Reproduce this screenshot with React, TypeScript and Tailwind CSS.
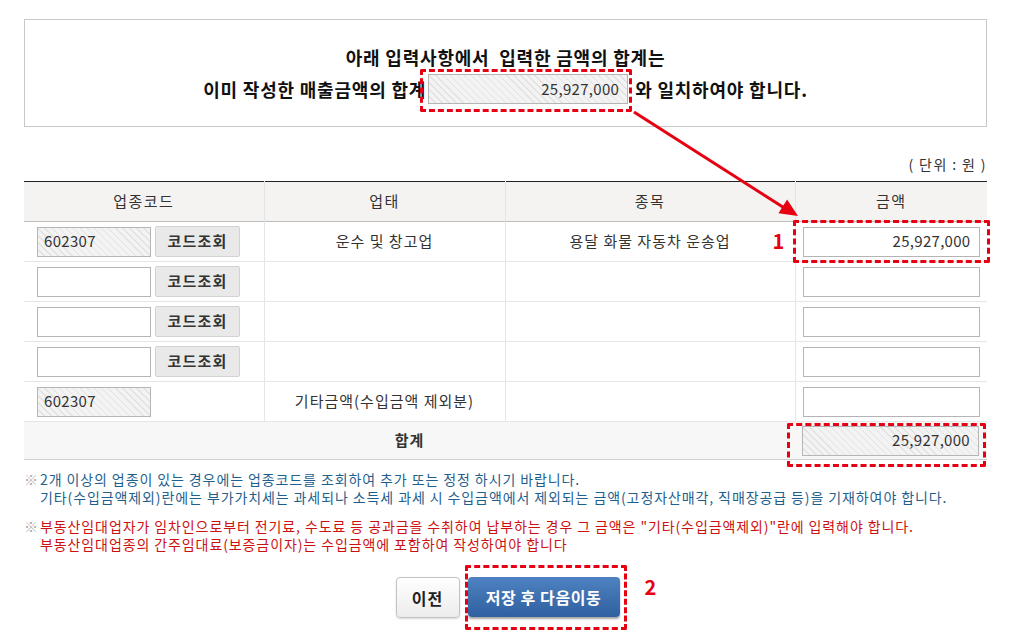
import React from 'react'

const hatch =
  'bg-[repeating-linear-gradient(45deg,#f3f3f3_0px,#f3f3f3_4px,#e2e2e2_4px,#e2e2e2_5px)]'

type Row = { code: string; codeLocked: boolean; lookup: boolean; biz: string; item: string; amount: string }

const rows: Row[] = [
  { code: '602307', codeLocked: true, lookup: true, biz: '운수 및 창고업', item: '용달 화물 자동차 운송업', amount: '25,927,000' },
  { code: '', codeLocked: false, lookup: true, biz: '', item: '', amount: '' },
  { code: '', codeLocked: false, lookup: true, biz: '', item: '', amount: '' },
  { code: '', codeLocked: false, lookup: true, biz: '', item: '', amount: '' },
  { code: '602307', codeLocked: true, lookup: false, biz: '기타금액(수입금액 제외분)', item: '', amount: '' },
]

function Box({ value, locked, className }: { value: string; locked?: boolean; className: string }) {
  return (
    <div
      className={`h-[30px] border border-[#b5b5b5] flex items-center text-[15px] tracking-[0.3px] text-[#333] ${
        locked ? hatch : 'bg-white'
      } ${className}`}
    >
      {value}
    </div>
  )
}

export default function App() {
  return (
    <div
      className="relative w-[1012px] h-[641px] bg-white overflow-hidden pl-[24px] pr-[25px] pt-[19px]"
      style={{ fontFamily: '"Noto Sans CJK KR", "Noto Sans", sans-serif' }}
    >
      {/* notice box */}
      <div className="h-[108px] border border-[#c8c8c8] pt-[25px] text-[18px] tracking-[0.8px] font-bold text-[#111]">
        <div className="text-center leading-[25px]">아래 입력사항에서 &nbsp;입력한 금액의 합계는</div>
        <div className="mt-[4px] flex items-center justify-center leading-[30px]">
          <span className="mr-[2px]">이미 작성한 매출금액의 합계</span>
          <div className="relative">
            <Box value="25,927,000" locked className="w-[200px] justify-end pr-[8px] font-normal tracking-[0.3px]" />
            <div className="absolute left-[-8px] right-[-4px] top-[-5px] bottom-[-8px] border-[3px] border-dashed border-[#e60012] rounded-[2px]" />
          </div>
          <span className="ml-[7px]">와 일치하여야 합니다.</span>
        </div>
      </div>

      <div className="mt-[27px] mb-[7px] text-right text-[14px] tracking-[1.4px] leading-[20px] text-[#333]">( 단위 : 원 )</div>

      {/* table */}
      <table className="w-[963px] border-collapse table-fixed text-[15px] tracking-[1px] text-[#333]">
        <colgroup>
          <col className="w-[240px]" />
          <col className="w-[241px]" />
          <col className="w-[290px]" />
          <col className="w-[192px]" />
        </colgroup>
        <thead>
          <tr className="h-[40px] bg-[#f4f3f2] border-t border-t-[#222] border-b border-b-[#bdbdbd]">
            <th className="font-normal tracking-[1.4px] border-r border-[#e3e3e3]">업종코드</th>
            <th className="font-normal tracking-[1.4px] border-r border-[#e3e3e3]">업태</th>
            <th className="font-normal tracking-[1.4px] border-r border-[#e3e3e3]">종목</th>
            <th className="font-normal tracking-[1.4px]">금액</th>
          </tr>
        </thead>
        <tbody>
          {rows.map((r, i) => (
            <tr key={i} className="h-[40px] border-b border-[#e6e6e6]">
              <td className="border-r border-[#e6e6e6] pl-[13px]">
                <div className="flex items-center gap-[4px]">
                  <Box value={r.code} locked={r.codeLocked} className="w-[114px] pl-[6px]" />
                  {r.lookup && (
                    <button className="w-[85px] h-[31px] bg-[#e9e9e9] border border-[#d2d2d2] rounded-[2px] text-[15px] tracking-[1.2px] font-bold text-[#333]">
                      코드조회
                    </button>
                  )}
                </div>
              </td>
              <td className="border-r border-[#e6e6e6] text-center">{r.biz}</td>
              <td className="border-r border-[#e6e6e6] text-center">{r.item}</td>
              <td className="pl-[7px]">
                <div className="relative w-[177px]">
                  <Box value={r.amount} className="w-[177px] justify-end pr-[8px]" />
                  {i === 0 && (
                    <>
                      <div className="absolute left-[-10px] right-[-10px] top-[-7px] bottom-[-6px] border-[3px] border-dashed border-[#e60012] rounded-[2px]" />
                      <span className="absolute left-[-30px] top-[-1px] text-[20px] font-bold text-[#e60012] leading-[30px]">
                        1
                      </span>
                    </>
                  )}
                </div>
              </td>
            </tr>
          ))}
          <tr className="h-[38px] bg-[#f7f7f7] border-b border-[#cfcfcf]">
            <td colSpan={3} className="text-center font-bold text-[15px]">합계</td>
            <td className="pl-[7px]">
              <div className="relative w-[177px]">
                <Box value="25,927,000" locked className="w-[177px] justify-end pr-[8px]" />
                <div className="absolute left-[-15px] right-[-7px] top-[-3px] bottom-[-11px] border-[3px] border-dashed border-[#e60012] rounded-[2px]" />
              </div>
            </td>
          </tr>
        </tbody>
      </table>

      {/* notes */}
      <div className="mt-[10px] text-[14px] tracking-[0.9px] leading-[18px]">
        <div className="flex text-[#1f5f8e]">
          <span className="w-[16px] shrink-0 tracking-normal text-[14px] text-[#aaa]">※</span>
          <div>
            <div>2개 이상의 업종이 있는 경우에는 업종코드를 조회하여 추가 또는 정정 하시기 바랍니다.</div>
            <div>기타(수입금액제외)란에는 부가가치세는 과세되나 소득세 과세 시 수입금액에서 제외되는 금액(고정자산매각, 직매장공급 등)을 기재하여야 합니다.</div>
          </div>
        </div>
        <div className="flex text-[#cc1111] mt-[11px]">
          <span className="w-[16px] shrink-0 tracking-normal text-[14px] text-[#aaa]">※</span>
          <div>
            <div>부동산임대업자가 임차인으로부터 전기료, 수도료 등 공과금을 수취하여 납부하는 경우 그 금액은 "기타(수입금액제외)"란에 입력해야 합니다.</div>
            <div>부동산임대업종의 간주임대료(보증금이자)는 수입금액에 포함하여 작성하여야 합니다</div>
          </div>
        </div>
      </div>

      {/* buttons */}
      <div className="mt-[24px] flex justify-center gap-[8px] pl-[4px]">
        <button className="w-[64px] h-[41px] rounded-[4px] border border-[#c4c4c4] bg-[linear-gradient(#ffffff,#ececec)] shadow-[0_1px_2px_rgba(0,0,0,0.15)] text-[16px] tracking-[1px] font-bold text-[#222]">
          이전
        </button>
        <div className="relative">
          <button className="w-[152px] h-[40px] rounded-[4px] bg-[linear-gradient(#4f82c2,#2f609f)] shadow-[0_2px_2px_rgba(0,0,0,0.35)] text-[16px] tracking-[0.6px] font-bold text-white">
            저장 후 다음이동
          </button>
          <div className="absolute left-[-3px] right-[-7px] top-[-12px] bottom-[-12px] border-[3px] border-dashed border-[#e60012] rounded-[2px]" />
          <span className="absolute left-[177px] top-[-5px] text-[20px] font-bold text-[#e60012] leading-[30px]">2</span>
        </div>
      </div>

      {/* arrow */}
      <svg className="absolute left-0 top-0 pointer-events-none" width="1012" height="641">
        <line x1="634" y1="112" x2="786" y2="209" stroke="#e60012" strokeWidth="3" />
        <polygon points="798,216 778.5,213.2 787.1,199.6" fill="#e60012" />
      </svg>
    </div>
  )
}
